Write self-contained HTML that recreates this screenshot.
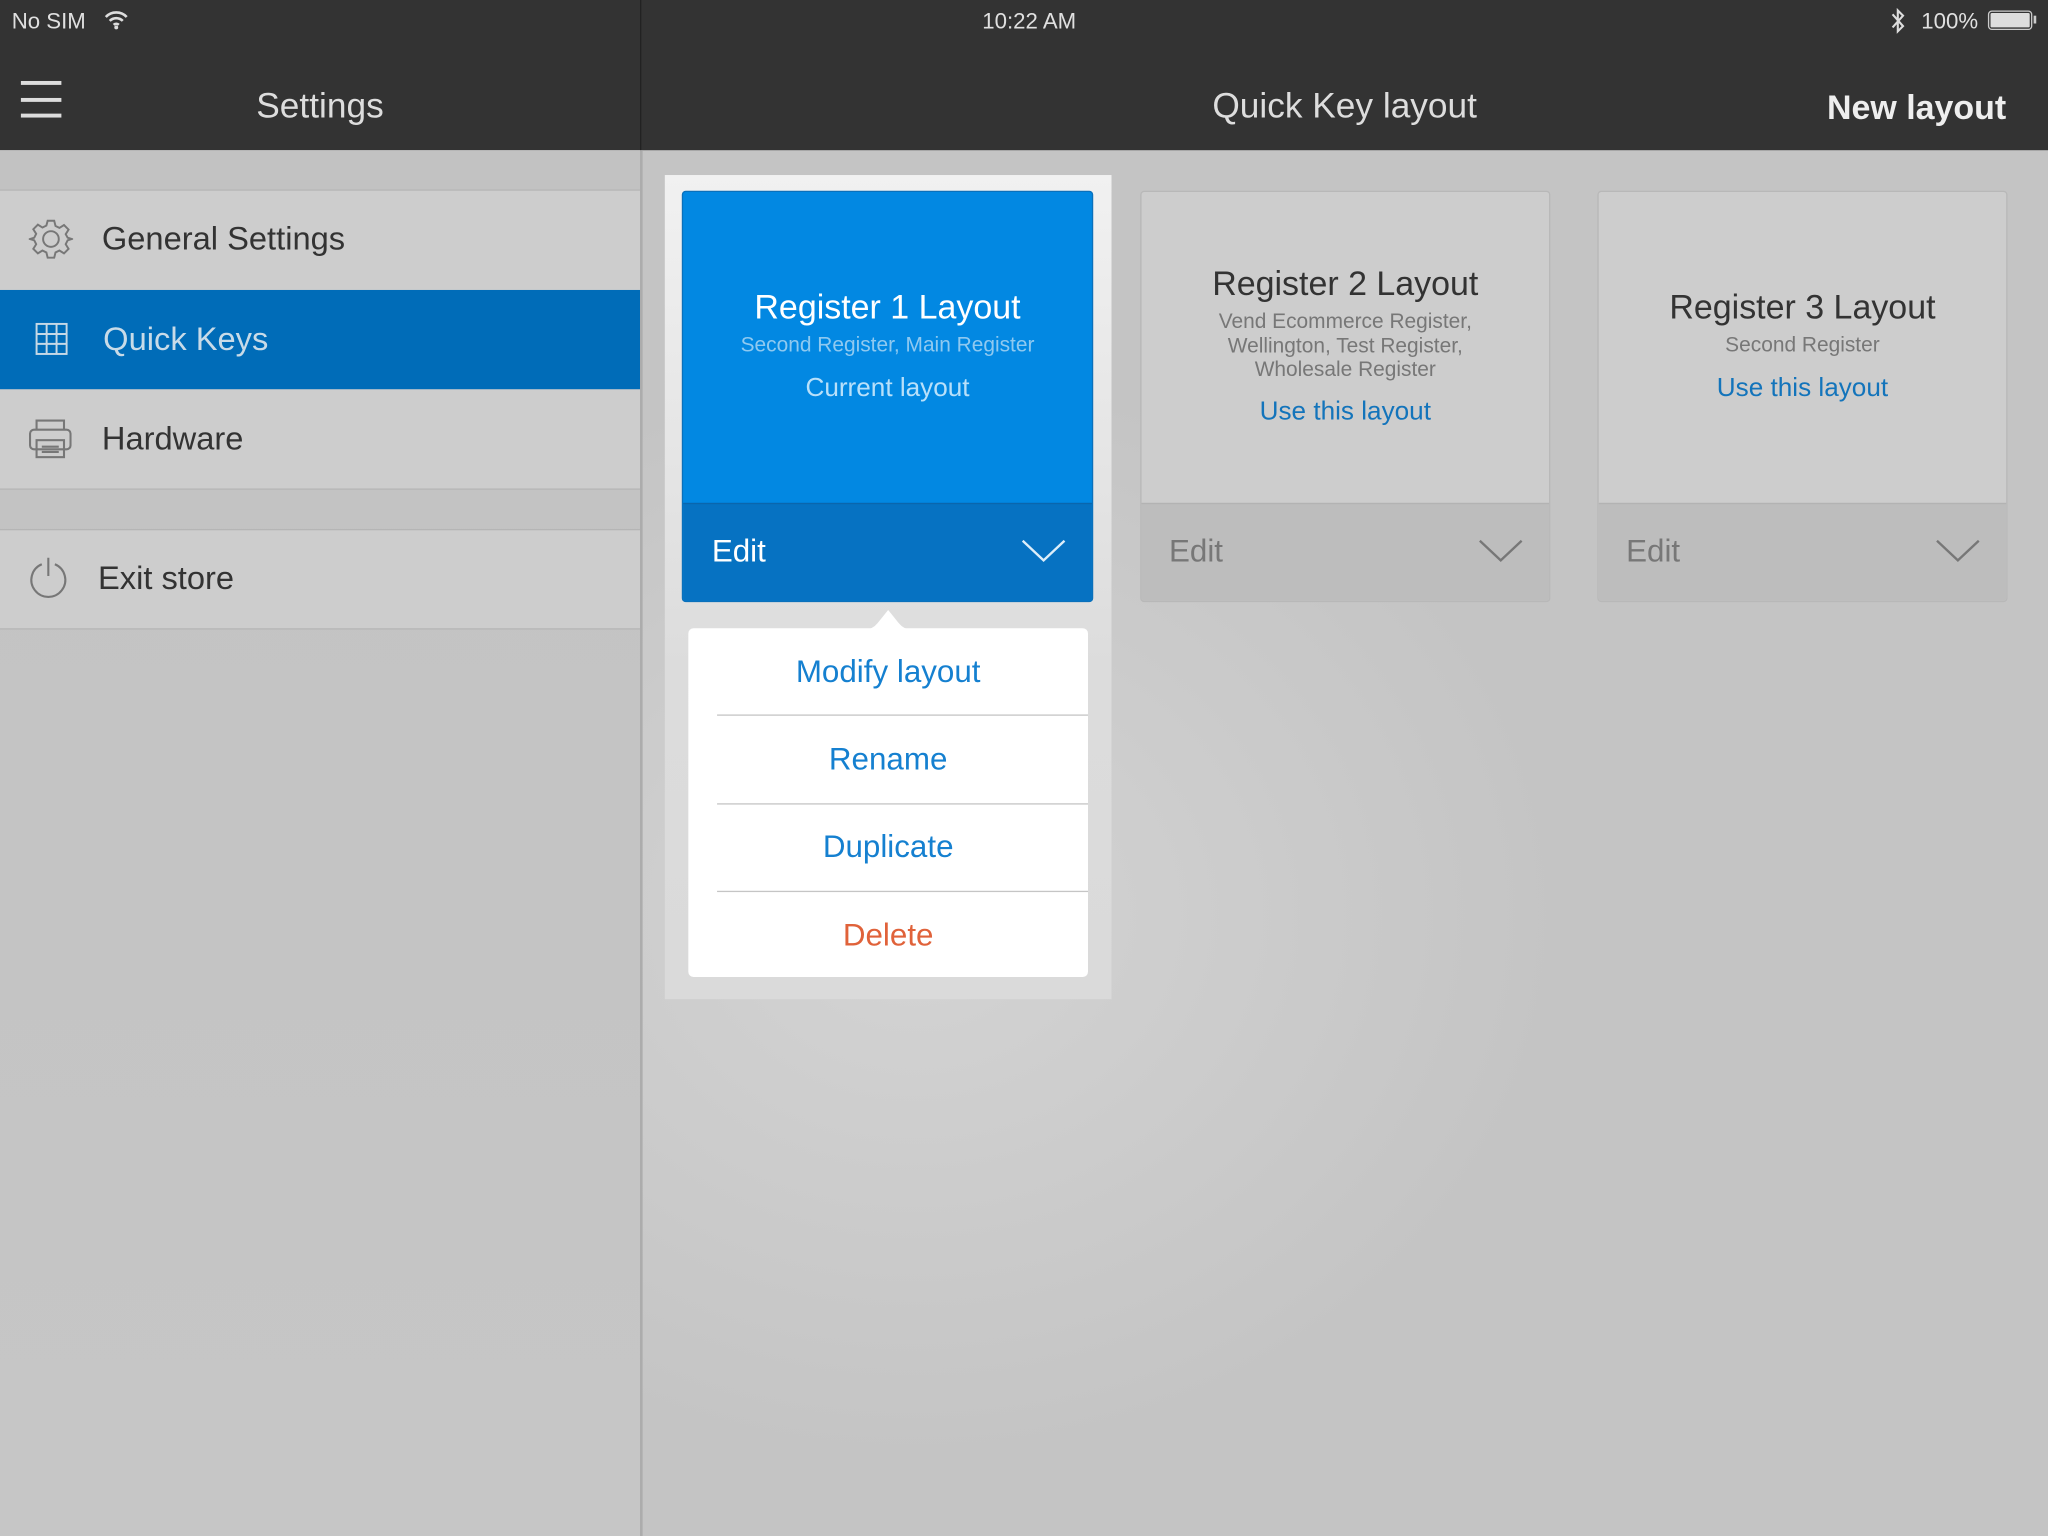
<!DOCTYPE html>
<html><head><meta charset="utf-8"><style>
*{margin:0;padding:0;box-sizing:border-box}
html,body{width:2048px;height:1536px;overflow:hidden;background:#c4c4c4}
#w{position:absolute;left:0;top:0;width:1568px;height:1176px;transform:scale(1.306122);transform-origin:0 0;font-family:"Liberation Sans",sans-serif;
background:radial-gradient(ellipse 500px 420px at 700px 700px,#d4d4d4,#c4c4c4 100%)}
.a{position:absolute}
.t{position:absolute;white-space:nowrap}
.c{text-align:center}
</style></head><body><div id="w">
<div class="a" style="left:0;top:0;width:1568px;height:115px;background:#333"></div>
<div class="a" style="left:490px;top:0;width:1px;height:115px;background:#222"></div>
<div class="t" style="left:9px;top:7px;font-size:17px;color:#e0e0e0">No SIM</div>
<svg class="a" style="left:79px;top:7px" width="20" height="16" viewBox="0 0 20 16"><path d="M2 6a11 11 0 0 1 16 0M5 9a7 7 0 0 1 10 0M8 12a3 3 0 0 1 4 0" stroke="#ddd" stroke-width="2" fill="none"/><circle cx="10" cy="14" r="1.5" fill="#ddd"/></svg>
<div class="t" style="left:4px;width:1568px;top:7px;font-size:17px;color:#e0e0e0;text-align:center">10:22 AM</div>
<svg class="a" style="left:1446px;top:5px" width="14" height="22" viewBox="0 0 14 22"><path d="M3 6l8 9-4 4V3l4 4-8 9" stroke="#ddd" stroke-width="1.6" fill="none"/></svg>
<div class="t" style="left:1471px;top:7px;font-size:17px;color:#e0e0e0">100%</div>
<div class="a" style="left:1522px;top:8px;width:34px;height:15px;border:1px solid #ccc;border-radius:3px;padding:1px"><div style="width:100%;height:100%;background:#ddd;border-radius:1px"></div></div>
<div class="a" style="left:1557px;top:12px;width:2px;height:6px;background:#ccc"></div>
<div class="a" style="left:16px;top:62px;width:31px;height:3px;background:#ddd"></div>
<div class="a" style="left:16px;top:75px;width:31px;height:3px;background:#ddd"></div>
<div class="a" style="left:16px;top:87px;width:31px;height:3px;background:#ddd"></div>
<div class="t" style="left:0;width:490px;top:66px;font-size:27px;color:#ddd;text-align:center">Settings</div>
<div class="t" style="left:491px;width:1077px;top:66px;font-size:27px;color:#ddd;text-align:center">Quick Key layout</div>
<div class="t" style="right:32px;top:67px;font-size:26px;color:#eee;font-weight:bold">New layout</div>
<div class="a" style="left:0;top:115px;width:490px;height:1061px;background:linear-gradient(#c2c2c2,#c6c6c6)"></div>
<div class="a" style="left:490px;top:115px;width:2px;height:1061px;background:#acacac"></div>
<div class="a" style="left:0;top:145px;width:490px;height:230px;background:#cdcdcd;border-top:1px solid #b5b5b5;border-bottom:1px solid #b5b5b5"></div>
<div class="a" style="left:0;top:222px;width:490px;height:76px;background:#006cb8"></div>
<div class="a" style="left:0;top:405px;width:490px;height:77px;background:#cdcdcd;border-top:1px solid #b5b5b5;border-bottom:1px solid #b5b5b5"></div>
<svg class="a" style="left:22px;top:166px" width="34" height="34" viewBox="0 0 34 34"><g fill="none" stroke="#777" stroke-width="1.5"><circle cx="17" cy="17" r="6"/><path d="M14.5 3h5l1 4 3 1.5 3.5-2.2 3.5 3.5-2.2 3.5L29.8 16l3.2 1v0l-3.2 1-1.5 3 2.2 3.5-3.5 3.5-3.5-2.2-3 1.5-1 4h-5l-1-4-3-1.5-3.5 2.2-3.5-3.5 2.2-3.5L4.2 18 1 17l3.2-1 1.5-3-2.2-3.5 3.5-3.5 3.5 2.2 3-1.5z"/></g></svg>
<div class="t" style="left:78px;top:169px;font-size:25px;color:#333">General Settings</div>
<svg class="a" style="left:27px;top:247px" width="25" height="25" viewBox="0 0 25 25"><g fill="none" stroke="#c5d8e6" stroke-width="1.5"><rect x="1" y="1" width="23" height="23"/><path d="M8.7 1v23M16.3 1v23M1 8.7h23M1 16.3h23"/></g></svg>
<div class="t" style="left:79px;top:246px;font-size:25px;color:#c8dbe8">Quick Keys</div>
<svg class="a" style="left:22px;top:320px" width="33" height="32" viewBox="0 0 33 32"><g fill="none" stroke="#777" stroke-width="1.6"><path d="M6 9V2h21v7"/><rect x="1" y="9" width="31" height="15" rx="3"/><rect x="6" y="17" width="21" height="13"/><path d="M10 22h13M10 26h13"/></g></svg>
<div class="t" style="left:78px;top:322px;font-size:25px;color:#333">Hardware</div>
<svg class="a" style="left:21px;top:426px" width="32" height="34" viewBox="0 0 32 34"><g fill="none" stroke="#777" stroke-width="1.6"><path d="M11 6a13 13 0 1 0 10 0"/><path d="M16 1v14"/></g></svg>
<div class="t" style="left:75px;top:429px;font-size:25px;color:#333">Exit store</div>
<div class="a" style="left:509px;top:134px;width:342px;height:631px;background:linear-gradient(#f1f1f1,#dcdcdc 60%,#dadada)"></div>
<div class="a" style="left:522px;top:146px;width:315px;height:315px;background:#0288e2;border-radius:3px;border:1px solid #0a70bb;overflow:hidden">
<div class="a" style="left:0;top:238px;width:315px;height:77px;background:#0672c2;border-top:1px solid #0a66ad"></div></div>
<div class="t c" style="left:522px;width:315px;top:220px;font-size:26px;color:#fff">Register 1 Layout</div>
<div class="t c" style="left:522px;width:315px;top:256px;font-size:16px;color:#8fc9f0">Second Register, Main Register</div>
<div class="t c" style="left:522px;width:315px;top:286px;font-size:20px;color:#b8e0fa">Current layout</div>
<div class="t" style="left:545px;top:409px;font-size:24px;color:#fff">Edit</div>
<svg class="a" style="left:782px;top:412px" width="34" height="20" viewBox="0 0 34 20"><path d="M1 2l16 15L33 2" stroke="#dceefa" stroke-width="1.8" fill="none"/></svg>
<svg class="a" style="left:640px;top:461px" width="80" height="22" viewBox="0 0 80 22"><path d="M0 21h22q6 0 10-5l8-10 8 10q4 5 10 5h22v1H0z" fill="#fff"/></svg>
<div class="a" style="left:527px;top:481px;width:306px;height:267px;background:#fff;border-radius:4px"></div>
<div class="a" style="left:549px;top:547px;width:284px;height:1px;background:#c5c5c5"></div>
<div class="a" style="left:549px;top:615px;width:284px;height:1px;background:#c5c5c5"></div>
<div class="a" style="left:549px;top:682px;width:284px;height:1px;background:#c5c5c5"></div>
<div class="t c" style="left:527px;width:306px;top:501px;font-size:24px;color:#1580d0">Modify layout</div>
<div class="t c" style="left:527px;width:306px;top:568px;font-size:24px;color:#1580d0">Rename</div>
<div class="t c" style="left:527px;width:306px;top:635px;font-size:24px;color:#1580d0">Duplicate</div>
<div class="t c" style="left:527px;width:306px;top:703px;font-size:24px;color:#e0623a">Delete</div>
<div class="a" style="left:873px;top:146px;width:314px;height:315px;background:#cdcdcd;border-radius:3px;border:1px solid #b8b8b8;overflow:hidden">
<div class="a" style="left:0;top:238px;width:314px;height:77px;background:#bdbdbd;border-top:1px solid #b3b3b3"></div></div>
<div class="t c" style="left:873px;width:314px;top:202px;font-size:26px;color:#333">Register 2 Layout</div>
<div class="t c" style="left:873px;width:314px;top:238px;font-size:16px;color:#777;line-height:18.5px">Vend Ecommerce Register,<br>Wellington, Test Register,<br>Wholesale Register</div>
<div class="t c" style="left:873px;width:314px;top:304px;font-size:20px;color:#1374bb">Use this layout</div>
<div class="t" style="left:895px;top:409px;font-size:24px;color:#777">Edit</div>
<svg class="a" style="left:1132px;top:412px" width="34" height="20" viewBox="0 0 34 20"><path d="M1 2l16 15L33 2" stroke="#777" stroke-width="1.8" fill="none"/></svg>
<div class="a" style="left:1223px;top:146px;width:314px;height:315px;background:#cdcdcd;border-radius:3px;border:1px solid #b8b8b8;overflow:hidden">
<div class="a" style="left:0;top:238px;width:314px;height:77px;background:#bdbdbd;border-top:1px solid #b3b3b3"></div></div>
<div class="t c" style="left:1223px;width:314px;top:220px;font-size:26px;color:#333">Register 3 Layout</div>
<div class="t c" style="left:1223px;width:314px;top:256px;font-size:16px;color:#777">Second Register</div>
<div class="t c" style="left:1223px;width:314px;top:286px;font-size:20px;color:#1374bb">Use this layout</div>
<div class="t" style="left:1245px;top:409px;font-size:24px;color:#777">Edit</div>
<svg class="a" style="left:1482px;top:412px" width="34" height="20" viewBox="0 0 34 20"><path d="M1 2l16 15L33 2" stroke="#777" stroke-width="1.8" fill="none"/></svg>
</div></body></html>
